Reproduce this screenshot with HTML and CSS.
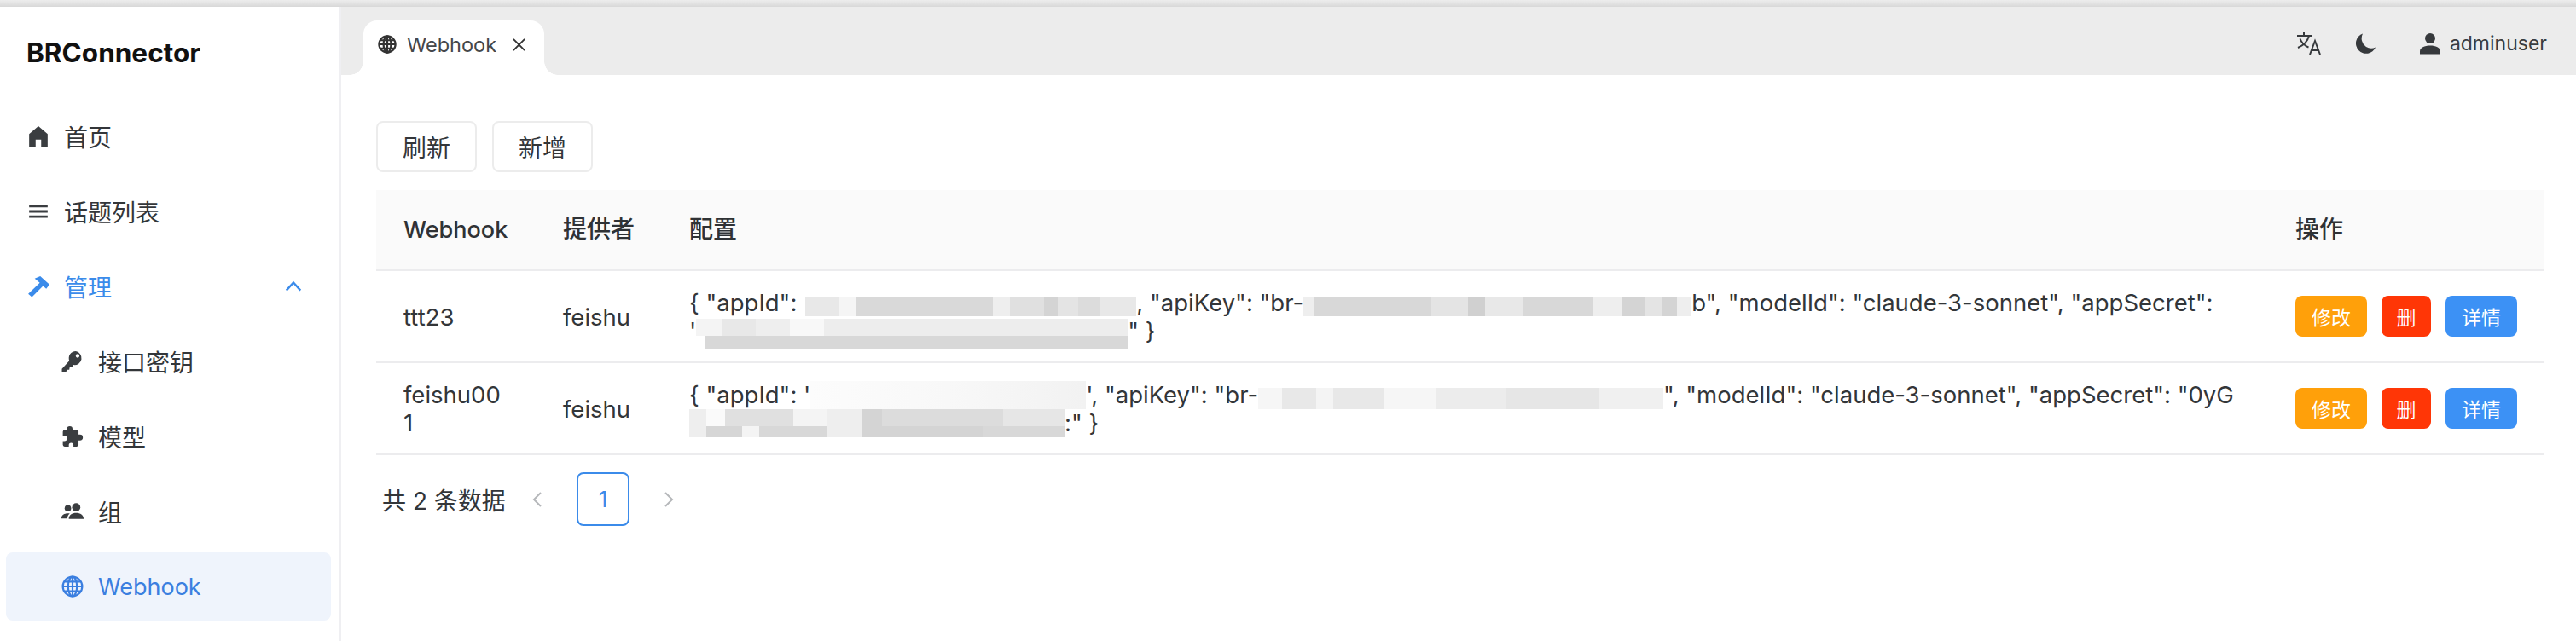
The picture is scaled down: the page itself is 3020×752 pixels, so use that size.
FILE: index.html
```html
<!DOCTYPE html>
<html lang="en">
<head>
    <meta charset="UTF-8">
    <title>BRConnector - Webhook</title>
    <link rel="stylesheet" href="styles.css">
</head>
<body>
    <div class="browser-edge"></div>
    <div class="app">
        <aside class="sidebar">
            <div class="logo">BRConnector</div>
            <nav class="menu">
                <a class="menu-item">
                    <svg class="icon" viewBox="0 0 24 24"><path d="M12 1 2 9.500V23h7v-7.500h6V23h7V9.500Z"/></svg>
                    <span>首页</span>
                </a>
                <a class="menu-item">
                    <svg class="icon" viewBox="0 0 24 24"><path d="M2 5h20v2.600H2zM2 10.700h20v2.600H2zM2 16.400h20V19H2z"/></svg>
                    <span>话题列表</span>
                </a>
                <a class="menu-item active">
                    <svg class="icon" viewBox="0 0 24 24"><path d="M8 3.500 14 1l10 9-3.500 4.500-3.500-3L5 23.500 1 20 13.500 8Z"/></svg>
                    <span>管理</span>
                    <svg class="chevron" viewBox="0 0 24 24"><path d="M3 17 12 7l9 10"/></svg>
                </a>
                <a class="menu-item sub">
                    <svg class="icon" viewBox="0 0 24 24"><path d="M15.500 1a7.500 7.500 0 0 0-7 10.200L0.500 20v3.500H5L6 21h2.500l.5-3h2.500l1.500-2.200A7.500 7.500 0 1 0 15.500 1Zm2 7a2 2 0 1 1 0-4 2 2 0 0 1 0 4Z"/></svg>
                    <span>接口密钥</span>
                </a>
                <a class="menu-item sub">
                    <svg class="icon" viewBox="0 0 24 24"><path d="M9 1a3 3 0 0 1 3 3v1h5a1.500 1.500 0 0 1 1.500 1.500V10H20a3.200 3.200 0 0 1 0 6.400h-1.500V21a2 2 0 0 1-2 2h-3.500v-1.500a2.500 2.500 0 0 0-5 0V23H3.500a2 2 0 0 1-2-2v-4H3a3 3 0 0 0 0-6H1.500V7A2 2 0 0 1 3.500 5H6V4a3 3 0 0 1 3-3Z"/></svg>
                    <span>模型</span>
                </a>
                <a class="menu-item sub">
                    <svg class="icon" viewBox="0 0 24 24"><circle cx="7" cy="8.500" r="3.500"/><circle cx="16" cy="7.500" r="4.500"/><path d="M0 19c0-3 3-5 7-5 1 0 1.500.1 2 .3-1.500 1.200-2.500 3-2.500 4.700v.5H0ZM8 19.500c0-3.500 3.500-6 8-6s8 2.500 8 6V20H8Z"/></svg>
                    <span>组</span>
                </a>
                <a class="menu-item sub selected">
                    <svg class="icon globe" viewBox="0 0 24 24"><circle cx="12" cy="12" r="10.500"/><ellipse cx="12" cy="12" rx="4.800" ry="10.500"/><path d="M12 1.500v21M1.500 12h21M3 6.800h18M3 17.200h18"/></svg>
                    <span>Webhook</span>
                </a>
            </nav>
        </aside>
        <main class="main">
            <div class="topbar">
                <div class="tab">
                    <svg class="tab-icon globe" viewBox="0 0 24 24"><circle cx="12" cy="12" r="10.500"/><ellipse cx="12" cy="12" rx="4.800" ry="10.500"/><path d="M12 1.500v21M1.500 12h21M3 6.800h18M3 17.200h18"/></svg>
                    <span>Webhook</span>
                    <svg class="tab-close" viewBox="0 0 18 18"><path d="M2 2l14 14M16 2 2 16"/></svg>
                </div>
                <div class="top-actions">
                    <svg class="top-icon translate" viewBox="0 0 30 30"><path d="M1 6h17M9 2v4M15 6c-1.500 6-6 11-13 14M4.500 9.500c2 5 6 8.500 10 10M16 28l6-16 6 16M18 23h8"/></svg>
                    <svg class="top-icon moon" viewBox="0 0 26 26"><path d="M10 1.500A12 12 0 1 0 25 17.500 11.500 11.500 0 0 1 14 17 12 12 0 0 1 10 1.500Z"/></svg>
                    <div class="user">
                        <svg class="top-icon" viewBox="0 0 24 26"><circle cx="12" cy="7" r="6"/><path d="M0 25.500V22c0-4 5.500-6.500 12-6.500S24 18 24 22v3.500Z"/></svg>
                        <span>adminuser</span>
                    </div>
                </div>
            </div>
            <div class="content">
                <div class="toolbar">
                    <button class="btn">刷新</button>
                    <button class="btn">新增</button>
                </div>
                <table class="data-table">
                    <thead>
                        <tr>
                            <th class="col-name">Webhook</th>
                            <th class="col-provider">提供者</th>
                            <th>配置</th>
                            <th class="col-actions">操作</th>
                        </tr>
                    </thead>
                    <tbody>
                        <tr>
                            <td>ttt23</td>
                            <td>feishu</td>
                            <td class="config">{ "appId":<i class="blur b1"></i>, "apiKey": "br-<i class="blur b2"></i>b", "modelId": "claude-3-sonnet", "appSecret":<br>'<i class="blur b3"></i>" }</td>
                            <td>
                                <div class="row-actions">
                                    <button class="act warn">修改</button>
                                    <button class="act danger">删</button>
                                    <button class="act info">详情</button>
                                </div>
                            </td>
                        </tr>
                        <tr>
                            <td>feishu00<br>1</td>
                            <td>feishu</td>
                            <td class="config">{ "appId": '<i class="blur b4"></i>', "apiKey": "br-<i class="blur b5"></i>", "modelId": "claude-3-sonnet", "appSecret": "0yG<br><i class="blur b6"></i>:" }</td>
                            <td>
                                <div class="row-actions">
                                    <button class="act warn">修改</button>
                                    <button class="act danger">删</button>
                                    <button class="act info">详情</button>
                                </div>
                            </td>
                        </tr>
                    </tbody>
                </table>
                <div class="pagination">
                    <span class="total">共 2 条数据</span>
                    <svg class="page-arrow" viewBox="0 0 12 20"><path d="M10 2 2 10l8 8"/></svg>
                    <span class="page current">1</span>
                    <svg class="page-arrow" viewBox="0 0 12 20"><path d="M2 2l8 8-8 8"/></svg>
                </div>
            </div>
        </main>
    </div>
</body>
</html>
```

FILE: styles.css
```css
* {
    margin: 0;
    padding: 0;
    box-sizing: border-box;
    font-family: Inter, "Noto Sans CJK SC", sans-serif;
}

html, body {
    height: 100%;
    overflow: hidden;
    background: #fff;
    color: #333639;
}

.browser-edge {
    height: 8px;
    background: linear-gradient(#ededed, #d8d8d8);
}

.app {
    display: flex;
    height: 744px;
}

/* Sidebar */
.sidebar {
    width: 400px;
    flex-shrink: 0;
    border-right: 2px solid #efeff2;
    background: #fff;
}

.logo {
    padding: 34px 0 0 31px;
    height: 110px;
    font-size: 31.500px;
    font-weight: bold;
    color: #111;
}

.menu {
    display: flex;
    flex-direction: column;
    gap: 8px;
    padding: 2px 10px 0 7px;
}

.menu-item {
    display: flex;
    align-items: center;
    height: 80px;
    padding-left: 25px;
    border-radius: 8px;
    font-size: 28px;
    color: #333639;
}

.menu-item .icon {
    width: 26px;
    height: 26px;
    margin-right: 17px;
    fill: #3a3d40;
    flex-shrink: 0;
}

.menu-item.sub {
    padding-left: 65px;
}

.menu-item.active {
    color: #3b8bea;
}

.menu-item.active .icon {
    fill: #3b8bea;
}

.chevron {
    width: 22px;
    height: 22px;
    margin-left: auto;
    margin-right: 33px;
    fill: none;
    stroke: #3b8bea;
    stroke-width: 2.6;
}

.menu-item.selected {
    background: #eff4fc;
    color: #3b7fe0;
    font-size: 27px;
}

.menu-item .icon.globe {
    fill: none;
    stroke: #3b7fe0;
    stroke-width: 2;
}

/* Top bar */
.main {
    flex: 1;
    min-width: 0;
}

.topbar {
    display: flex;
    justify-content: space-between;
    height: 80px;
    background: #ececec;
    padding: 16px 34px 0 26px;
}

.tab {
    position: relative;
    display: flex;
    align-items: flex-start;
    width: 212px;
    height: 64px;
    padding: 14px 0 0 17px;
    background: #fff;
    border-radius: 16px 16px 0 0;
    font-size: 23.500px;
    color: #44474a;
}

.tab::before, .tab::after {
    content: '';
    position: absolute;
    bottom: 0;
    width: 16px;
    height: 16px;
}

.tab::before {
    left: -16px;
    background: radial-gradient(circle at 0 0, transparent 15.500px, #fff 16px);
}

.tab::after {
    right: -16px;
    background: radial-gradient(circle at 100% 0, transparent 15.500px, #fff 16px);
}

.tab-icon {
    width: 22px;
    height: 22px;
    margin: 3px 12px 0 0;
    fill: none;
    stroke: #333;
    stroke-width: 2.400;
}

.tab-close {
    width: 17px;
    height: 17px;
    margin: 6px 0 0 18px;
    fill: none;
    stroke: #333;
    stroke-width: 2;
}

.top-actions {
    display: flex;
    align-items: center;
    height: 50px;
    margin-top: 2px;
}

.top-icon {
    width: 26px;
    height: 26px;
    fill: #36393c;
}

.top-icon.translate {
    width: 30px;
    height: 30px;
    margin-right: 38px;
    fill: none;
    stroke: #36393c;
    stroke-width: 2;
}

.top-icon.moon {
    margin-right: 50px;
}

.user {
    display: flex;
    align-items: center;
    gap: 10px;
    font-size: 23px;
    color: #3a3d40;
}

/* Content */
.content {
    padding: 54px 38px 0 41px;
}

.toolbar {
    display: flex;
    gap: 18px;
    margin-bottom: 21px;
}

.btn {
    width: 118px;
    height: 60px;
    border: 2px solid #ececec;
    border-radius: 8px;
    background: #fff;
    font-size: 28px;
    color: #333639;
}

/* Table */
.data-table {
    width: 100%;
    border-collapse: collapse;
    table-layout: fixed;
    font-size: 27.500px;
    line-height: 33px;
}

.data-table th {
    height: 94px;
    padding-left: 32px;
    background: #fafafa;
    border-bottom: 2px solid #ececee;
    text-align: left;
    font-size: 28px;
    font-weight: 500;
    color: #2f3235;
}

.data-table th.col-name {
    width: 187px;
    font-size: 27px;
}

.data-table td {
    height: 108px;
    padding: 2px 0 0 32px;
    border-bottom: 2px solid #ececee;
    color: #333639;
}

.col-provider {
    width: 148px;
}

.col-actions {
    width: 323px;
}

.config {
    white-space: nowrap;
    overflow: hidden;
}

/* Redacted parts of the config, drawn as mosaic cells */
.blur {
    display: inline-block;
    vertical-align: top;
    background-repeat: no-repeat;
}

.b1 {
    width: 388px;
    height: 22px;
    margin: 10px 0 1px 10px;
    background-image: linear-gradient(90deg, #e8e8e8 40px, #f5f5f5 40px 60px, #d9d9d9 60px 220px, #eee 220px 240px, #e0e0e0 240px 280px, #d4d4d4 280px 296px, #e4e4e4 296px 320px, #dcdcdc 320px 346px, #e8e8e8 346px);
}

.b2 {
    width: 455px;
    height: 22px;
    margin-top: 10px;
    margin-bottom: 1px;
    background-image: linear-gradient(90deg, #eee 13px, #d8d8d8 13px 150px, #e4e4e4 150px 193px, #d0d0d0 193px 213px, #e8e8e8 213px 257px, #d8d8d8 257px 340px, #eee 340px 374px, #d4d4d4 374px 400px, #e4e4e4 400px 420px, #d4d4d4 420px 438px, #eee 438px);
}

.b3 {
    width: 506px;
    height: 35px;
    margin-top: 2px;
    margin-bottom: -4px;
    background-image:
        linear-gradient(90deg, #f4f4f4 30px, #e8e8e8 30px 70px, #eee 70px 110px, #f8f8f8 110px 150px, #ededed 150px),
        linear-gradient(90deg, #fff 10px, #d8d8d8 10px);
    background-size: 100% 20px, 100% 15px;
    background-position: top, bottom;
}

.b4 {
    width: 323px;
    height: 33px;
    background-image: linear-gradient(90deg, #fcfcfc, #f8f8f8 50%, #f2f2f2);
}

.b5 {
    width: 475px;
    height: 25px;
    margin-top: 8px;
    background-image: linear-gradient(90deg, #f6f6f6 28px, #e8e8e8 28px 68px, #f4f4f4 68px 88px, #e8e8e8 88px 148px, #f6f6f6 148px 208px, #ececec 208px 290px, #e6e6e6 290px 400px, #f0f0f0 400px);
}

.b6 {
    width: 440px;
    height: 33px;
    background-image:
        linear-gradient(90deg, #eee 20px, #fafafa 20px 42px, #e0e0e0 42px 122px, #f4f4f4 122px 162px, #eee 162px 202px, #d4d4d4 202px 226px, #dcdcdc 226px 368px, #e6e6e6 368px),
        linear-gradient(90deg, #eee 20px, #d6d6d6 20px 62px, #f4f4f4 62px 82px, #d8d8d8 82px 162px, #eee 162px 202px, #d4d4d4 202px 345px, #d8d8d8 345px);
    background-size: 100% 20px, 100% 13px;
    background-position: top, bottom;
}

.row-actions {
    display: flex;
    gap: 17px;
    margin-top: -2px;
}

.act {
    height: 48px;
    border: none;
    border-radius: 8px;
    font-size: 23px;
    color: #fff;
}

.warn {
    width: 84px;
    background: #ffa00a;
}

.danger {
    width: 58px;
    background: #ff3606;
}

.info {
    width: 84px;
    background: #3c91f5;
}

/* Pagination */
.pagination {
    display: flex;
    align-items: center;
    margin: 20px 0 0 7px;
    font-size: 28px;
}

.total {
    width: 176px;
}

.page-arrow {
    width: 12px;
    height: 20px;
    fill: none;
    stroke: #b5b7ba;
    stroke-width: 2;
}

.page {
    display: flex;
    align-items: center;
    justify-content: center;
    width: 62px;
    height: 63px;
    margin: 0 40px;
    border: 2px solid #3b8bea;
    border-radius: 8px;
    color: #3b8bea;
    font-size: 26px;
}
```
